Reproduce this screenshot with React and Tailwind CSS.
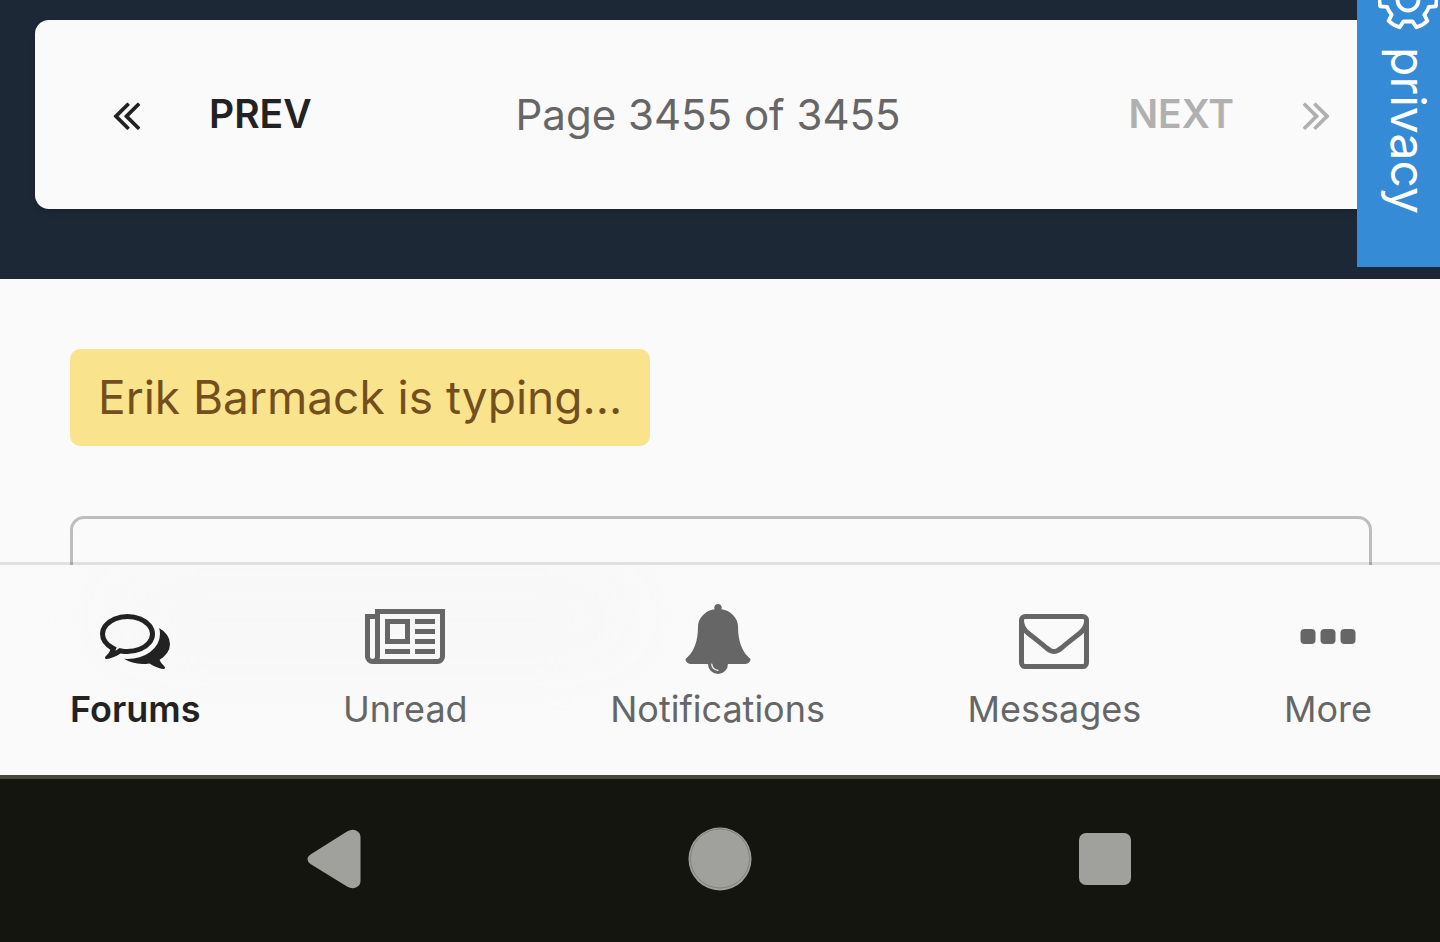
import React, { useState } from "react";

const icons = {
  comments: {
    width: 1792,
    path: "M704 384q-153 0-286 52t-211.5 141-78.5 191q0 82 53 158t149 132l97 56-35 84q34-20 62-39l44-31 53 10q78 14 153 14 153 0 286-52t211.5-141 78.5-191-78.5-191-211.5-141-286-52zm0-128q191 0 353.5 68.5t256.5 186.5 94 257-94 257-256.5 186.5-353.5 68.5q-86 0-176-16-124 88-278 128-36 9-86 16h-3q-11 0-20.5-8t-11.5-21q-1-3-1-6.5t.5-6.5 2-6l2.5-5 3.5-5.5 4-5 4.5-5 4-4.5q5-6 23-25t26-29.5 22.5-29 25-38.5 20.5-44q-124-72-195-177t-71-224q0-139 94-257t256.5-186.5 353.5-68.5zm822 1169q10 24 20.5 44t25 38.5 22.5 29 26 29.5 23 25q1 1 4 4.5t4.5 5 4 5 3.5 5.5l2.5 5 2 6 .5 6.5-1 6.5q-3 14-13 22t-22 7q-50-7-86-16-154-40-278-128-90 16-176 16-271 0-472-132 58 4 88 4 161 0 309-45t264-129q125-92 192-212t67-254q0-77-23-152 129 71 204 178t75 230q0 120-71 224.5t-195 176.5z",
  },
  newspaper: {
    width: 2048,
    path: "M1024 512h-384v384h384v-384zm128 640v128h-640v-128h640zm0-768v640h-640v-640h640zm640 768v128h-512v-128h512zm0-256v128h-512v-128h512zm0-256v128h-512v-128h512zm0-256v128h-512v-128h512zm-1536 960v-960h-128v960q0 26 19 45t45 19 45-19 19-45zm1664 0v-1088h-1536v1088q0 33-11 64h1483q26 0 45-19t19-45zm128-1216v1216q0 80-56 136t-136 56h-1664q-80 0-136-56t-56-136v-1088h256v-128h1792z",
  },
  bell: {
    width: 1792,
    path: "M912 1696q0-16-16-16-59 0-101.5-42.5t-42.5-101.5q0-16-16-16t-16 16q0 73 51.5 124.5t124.5 51.5q16 0 16-16zm816-288q0 52-38 90t-90 38h-448q0 106-75 181t-181 75-181-75-75-181h-448q-52 0-90-38t-38-90q50-42 91-88t85-119.5 74.5-158.5 50-206 19.5-260q0-152 117-282.5t307-158.5q-8-19-8-39 0-40 28-68t68-28 68 28 28 68q0 20-8 39 190 28 307 158.5t117 282.5q0 139 19.5 260t50 206 74.5 158.5 85 119.5 91 88z",
  },
  envelope: {
    width: 1792,
    path: "M1664 1504v-768q-32 36-69 66-268 206-426 338-51 43-83 67t-86.5 48.5-102.5 24.5h-2q-48 0-102.5-24.5t-86.5-48.5-83-67q-158-132-426-338-37-30-69-66v768q0 13 9.5 22.5t22.5 9.5h1472q13 0 22.5-9.5t9.5-22.5zm0-1051v-24.5l-.5-13-3-12.5-5.5-9-9-7.5-14-2.5h-1472q-13 0-22.5 9.5t-9.5 22.5q0 168 147 284 193 152 401 317 6 5 35 29.5t46 37.5 44.5 31.5 50.5 27.5 43 9h2q20 0 43-9t50.5-27.5 44.5-31.5 46-37.5 35-29.5q208-165 401-317 54-43 100.5-115.5t46.5-131.5zm128-37v1088q0 66-47 113t-113 47h-1472q-66 0-113-47t-47-113v-1088q0-66 47-113t113-47h1472q66 0 113 47t47 113z",
  },
  ellipsis: {
    width: 1792,
    path: "M576 736v192q0 40-28 68t-68 28h-192q-40 0-68-28t-28-68v-192q0-40 28-68t68-28h192q40 0 68 28t28 68zm512 0v192q0 40-28 68t-68 28h-192q-40 0-68-28t-28-68v-192q0-40 28-68t68-28h192q40 0 68 28t28 68zm512 0v192q0 40-28 68t-68 28h-192q-40 0-68-28t-28-68v-192q0-40 28-68t68-28h192q40 0 68 28t28 68z",
  },
  angleLeft: {
    width: 1792,
    path: "M1011 1376q0 13-10 23l-50 50q-10 10-23 10t-23-10l-466-466q-10-10-10-23t10-23l466-466q10-10 23-10t23 10l50 50q10 10 10 23t-10 23l-393 393 393 393q10 10 10 23zm384 0q0 13-10 23l-50 50q-10 10-23 10t-23-10l-466-466q-10-10-10-23t10-23l466-466q10-10 23-10t23 10l50 50q10 10 10 23t-10 23l-393 393 393 393q10 10 10 23z",
  },
  angleRight: {
    width: 1792,
    path: "M979 960q0 13-10 23l-466 466q-10 10-23 10t-23-10l-50-50q-10-10-10-23t10-23l393-393-393-393q-10-10-10-23t10-23l50-50q10-10 23-10t23 10l466 466q10 10 10 23zm384 0q0 13-10 23l-466 466q-10 10-23 10t-23-10l-50-50q-10-10-10-23t10-23l393-393-393-393q-10-10-10-23t10-23l50-50q10-10 23-10t23 10l466 466q10 10 10 23z",
  },
};

const Icon = ({ name, className }) => (
  <svg
    viewBox={`0 0 ${icons[name].width} 1792`}
    className={className}
    fill="currentColor"
    aria-hidden="true"
  >
    <path d={icons[name].path} />
  </svg>
);

const navItems = [
  { label: "Forums", icon: "comments" },
  { label: "Unread", icon: "newspaper" },
  { label: "Notifications", icon: "bell" },
  { label: "Messages", icon: "envelope" },
  { label: "More", icon: "ellipsis" },
];

const App = () => {
  const [active, setActive] = useState("Forums");
  const [reply, setReply] = useState("");

  return (
    <div className="relative flex flex-col h-screen overflow-hidden bg-[#fafafa] font-['Inter',sans-serif]">
      {/* Pagination */}
      <section className="shrink-0 bg-[#1d2836] px-[35px] pt-5 pb-[70px]">
        <div className="flex items-center justify-between h-[189px] pl-[67px] pr-16 rounded-[14px] bg-[#fafafa] shadow-md">
          <button className="flex items-center gap-[58px] text-[39px] font-semibold text-[#222]">
            <Icon name="angleLeft" className="size-[49px]" />
            PREV
          </button>
          <span className="pr-6 text-[42px] text-[#666]">Page 3455 of 3455</span>
          <button
            className="flex items-center gap-[58px] text-[39px] font-semibold text-[#b0b0b0]"
            disabled
          >
            NEXT
            <Icon name="angleRight" className="size-[49px]" />
          </button>
        </div>
      </section>

      {/* Privacy tab */}
      <button className="absolute right-0 -top-16 flex flex-col items-center gap-[17px] w-[83px] h-[331px] pt-[34px] pl-[18px] bg-[#368bd6] text-white">
        <svg
          viewBox="0 0 60 60"
          className="size-[60px] shrink-0"
          fill="none"
          stroke="currentColor"
          strokeWidth="3.8"
          strokeLinejoin="round"
          aria-hidden="true"
        >
          <path d="M34.6 51.5L38.3 57.3Q44.5 55.5 49.4 50.8L46.3 44.7Q49.5 41 50.9 36.8L57.8 36.4Q59.3 30 57.8 23.6L50.9 23.2Q49.5 19 46.3 15.3L49.4 9.2Q44.5 4.5 38.3 2.7L34.6 8.5H25.4L21.7 2.7Q15.5 4.5 10.6 9.2L13.7 15.3Q10.5 19 9.1 23.2L2.2 23.6Q.7 30 2.2 36.4L9.1 36.8Q10.5 41 13.7 44.7L10.6 50.8Q15.5 55.5 21.7 57.3L25.4 51.5Z" />
          <circle cx="30" cy="30" r="10.5" />
        </svg>
        <span className="[writing-mode:vertical-rl] text-[48px] leading-[56px]">privacy</span>
      </button>

      {/* Reply area */}
      <main className="flex-1 min-h-0 overflow-hidden pl-[70px] pr-[68px] pt-[70px]">
        <p className="w-fit px-7 rounded-[10px] bg-[#f9e38c] text-[46px] leading-[97px] text-[#744f1e]">
          Erik Barmack is typing...
        </p>
        <textarea
          aria-label="Reply"
          className="block w-full h-60 mt-[70px] p-7 text-[46px] resize-none border-[3px] border-[#bdbdbd] rounded-[14px] bg-transparent"
          value={reply}
          onChange={(e) => setReply(e.target.value)}
        />
      </main>

      {/* Bottom navigation */}
      <nav className="relative z-0 shrink-0 flex justify-between -mt-[3px] pl-[70px] pr-[68px] py-[39px] border-t-[3px] border-black/10 bg-[#fafafa] bg-clip-padding">
        <div className="absolute inset-0 -z-10 overflow-hidden">
          <div className="w-[520px] h-16 mt-5 ml-28 bg-[#f6f6f6] blur-2xl" />
        </div>
        {navItems.map((item) => (
          <button
            key={item.label}
            className={`flex flex-col items-center gap-2 text-[36px] leading-[54px] ${
              active === item.label ? "font-semibold text-[#222]" : "text-[#666]"
            }`}
            onClick={() => setActive(item.label)}
          >
            <Icon name={item.icon} className="h-[70px]" />
            {item.label}
          </button>
        ))}
      </nav>

      {/* System bar */}
      <footer className="shrink-0 flex items-center justify-between h-[167px] px-[21%] pb-1 border-t-4 border-[#434a3a] bg-[#13150e] text-[#a0a09d]">
        <button aria-label="Back">
          <svg viewBox="0 0 64 64" className="size-16" fill="currentColor">
            <path d="M8.500 27.500L45 4.500Q50 1.500 54 3.500Q58.500 5.500 58.500 10V54Q58.500 58.500 54 60.500Q50 62.500 45 59.500L8.500 37Q5.500 35 5.500 32.300Q5.500 29.500 8.500 27.500Z" />
          </svg>
        </button>
        <button aria-label="Home">
          <svg viewBox="0 0 64 64" className="size-16" fill="currentColor">
            <circle cx="32" cy="32" r="31.500" />
            <circle cx="32" cy="31.500" r="29.500" fill="none" stroke="#777975" strokeWidth=".8" />
          </svg>
        </button>
        <button aria-label="Recent apps">
          <svg viewBox="0 0 64 64" className="size-16" fill="currentColor">
            <rect x="5" y="6" width="52" height="52" rx="7" />
          </svg>
        </button>
      </footer>
    </div>
  );
};

export default App;
